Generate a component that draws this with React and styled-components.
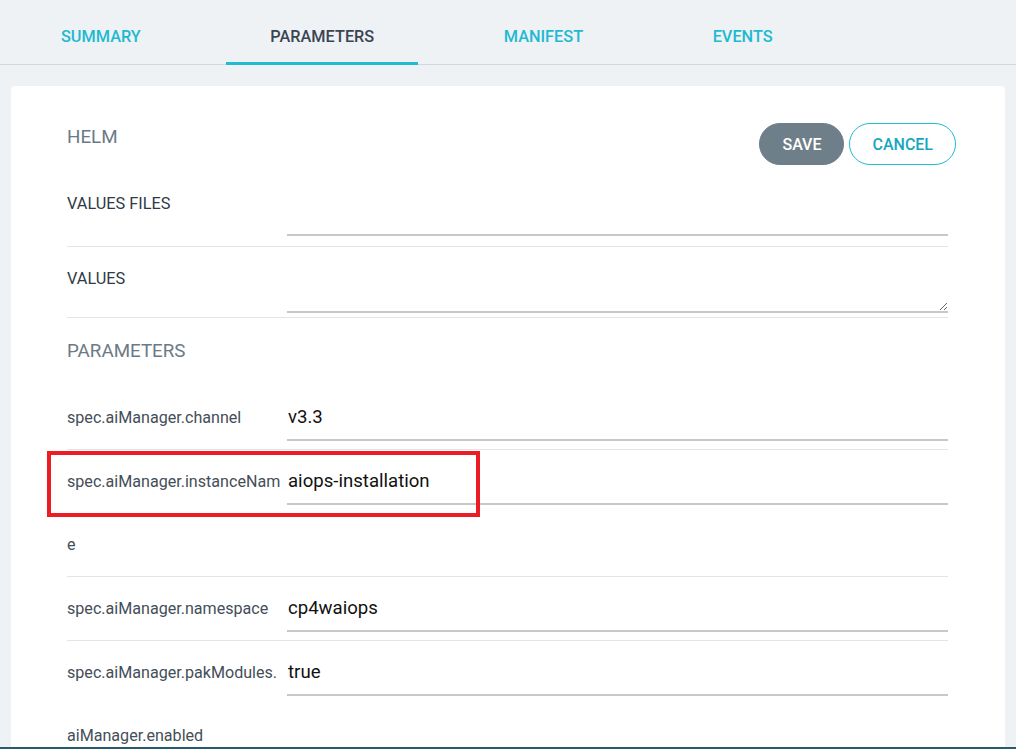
import styled, {createGlobalStyle} from 'styled-components';

const GlobalStyle = createGlobalStyle`
  html, body {
    height: 100%;
    margin: 0;
    padding: 0;
    overflow: hidden;
    background: #eef2f5;
    font-family: Roboto, 'Liberation Sans', sans-serif;
  }
`;

const Page = styled.div`
  display: flex;
  flex-direction: column;
  height: 100vh;
`;

const TabBar = styled.nav`
  display: flex;
  gap: 41.6px;
  padding-left: 17px;
  height: 65px;
  border-bottom: 1px solid #d3d8dc;
  box-sizing: border-box;
  flex-shrink: 0;
`;

const Tab = styled.div`
  display: flex;
  align-items: center;
  padding: 10px 44px 0;
  font-size: 16.3px;
  font-weight: 500;
  color: ${p => (p.$active ? '#3b4452' : '#1fb9d1')};
  border-bottom: 3px solid ${p => (p.$active ? '#1fbcd2' : 'transparent')};
  margin-bottom: -1px;
  box-sizing: border-box;
`;

const Body = styled.div`
  flex: 1;
  min-height: 0;
  padding: 21px 11px 0 11px;
  display: flex;
  flex-direction: column;
`;

const Card = styled.div`
  flex: 1;
  overflow: hidden;
  background: #fff;
  border-radius: 4px 4px 0 0;
  padding: 37px 57px 0 56px;
`;

const Header = styled.div`
  display: flex;
  justify-content: space-between;
  align-items: flex-start;
`;

const SectionTitle = styled.h2`
  margin: ${p => p.$margin || '0'};
  font-size: 18.8px;
  font-weight: 400;
  line-height: 28px;
  color: #6b7a85;
`;

const Actions = styled.div`
  display: flex;
  gap: 5px;
  margin-right: -8px;
`;

const Button = styled.button`
  height: 42px;
  border-radius: 21px;
  padding: 0 22px;
  font-family: inherit;
  font-size: 16px;
  font-weight: 500;
  cursor: pointer;
  border: 1px solid ${p => (p.$primary ? '#6e7f8a' : '#1fbcd2')};
  background: ${p => (p.$primary ? '#6e7f8a' : '#fff')};
  color: ${p => (p.$primary ? '#fff' : '#16a7bf')};
`;

const Row = styled.div`
  position: relative;
  display: flex;
  align-items: flex-start;
  padding-top: ${p => p.$top || 0}px;
  padding-bottom: ${p => p.$bottom || 0}px;
  border-bottom: ${p => (p.$last ? 'none' : '1px solid #dfe5ea')};
`;

const Label = styled.div`
  width: 216px;
  margin-right: 4px;
  flex-shrink: 0;
  font-size: ${p => (p.$caps ? '16.3px' : '16.1px')};
  line-height: 63px;
  color: ${p => (p.$caps ? '#2f3a46' : '#444e58')};
  overflow-wrap: anywhere;
`;

const Field = styled.input`
  flex: 1;
  min-width: 0;
  height: 47px;
  margin-top: ${p => p.$offset}px;
  box-sizing: border-box;
  border: none;
  border-bottom: 2px solid #c8c8c8;
  outline: none;
  padding: 0 1px;
  font-family: inherit;
  font-size: 18.6px;
  color: #111;
  background: transparent;
`;

const Area = styled.textarea`
  flex: 1;
  min-width: 0;
  height: 60px;
  margin-top: 6px;
  box-sizing: border-box;
  border: none;
  border-bottom: 2px solid #c8c8c8;
  outline: none;
  padding: 0 1px;
  font-family: inherit;
  font-size: 18px;
  background: transparent;
`;

const Highlight = styled.div`
  position: absolute;
  left: -20px;
  top: 1px;
  width: 433px;
  height: 66px;
  box-sizing: border-box;
  border: 4px solid #ec1c24;
  pointer-events: none;
`;

const BottomLine = styled.div`
  height: 2px;
  flex-shrink: 0;
  background: #285b6d;
`;

const params = [
  {key: 'spec.aiManager.channel', value: 'v3.3'},
  {key: 'spec.aiManager.instanceName', value: 'aiops-installation', marked: true},
  {key: 'spec.aiManager.namespace', value: 'cp4waiops'},
  {key: 'spec.aiManager.pakModules.aiManager.enabled', value: 'true', last: true},
];

const tabs = ['SUMMARY', 'PARAMETERS', 'MANIFEST', 'EVENTS'];

function App() {
  return (
    <>
      <GlobalStyle />
      <Page>
        <TabBar>
          {tabs.map(t => (
            <Tab key={t} $active={t === 'PARAMETERS'}>
              {t}
            </Tab>
          ))}
        </TabBar>
        <Body>
          <Card>
            <Header>
              <SectionTitle>HELM</SectionTitle>
              <Actions>
                <Button $primary>SAVE</Button>
                <Button>CANCEL</Button>
              </Actions>
            </Header>
            <Row $top={7} $bottom={10}>
              <Label $caps>VALUES FILES</Label>
              <Field $offset={17} readOnly />
            </Row>
            <Row $bottom={4}>
              <Label $caps>VALUES</Label>
              <Area readOnly />
            </Row>
            <SectionTitle $margin="19px 0 21px">PARAMETERS</SectionTitle>
            {params.map(p => (
              <Row key={p.key} $last={p.last}>
                <Label>{p.key.replace('pakModules.', 'pakModules.\u200b')}</Label>
                <Field $offset={8} defaultValue={p.value} readOnly />
                {p.marked && <Highlight />}
              </Row>
            ))}
          </Card>
        </Body>
        <BottomLine />
      </Page>
    </>
  );
}

export default App;
